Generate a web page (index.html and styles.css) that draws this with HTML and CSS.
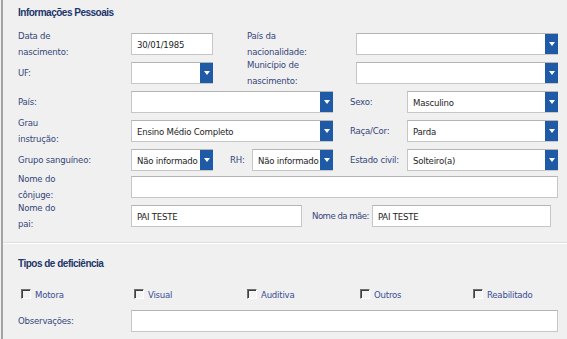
FILE: index.html
```html
<!doctype html>
<html lang="pt-br">
  <head>
    <meta charset="utf-8">
    <title>Informações Pessoais</title>
    <link rel="stylesheet" href="styles.css">
  </head>
  <body>
    <div id="panel">

      <div class="section" id="pessoais">
        <div class="title">Informações Pessoais</div>
        <div class="rows">
          <div class="row">
            <div class="lbl">Data de<br>nascimento:</div>
            <div class="field w82">30/01/1985</div>
            <div class="lbl lbl-nac">País da<br>nacionalidade:</div>
            <div class="field select w202"><span class="val"></span><span class="arrow"></span></div>
          </div>
          <div class="row">
            <div class="lbl">UF:</div>
            <div class="field select w82"><span class="val"></span><span class="arrow"></span></div>
            <div class="lbl lbl-nac">Município de<br>nascimento:</div>
            <div class="field select w202"><span class="val"></span><span class="arrow"></span></div>
          </div>
          <div class="row">
            <div class="lbl">País:</div>
            <div class="field select w202"><span class="val"></span><span class="arrow"></span></div>
            <div class="lbl lbl-right">Sexo:</div>
            <div class="field select w151"><span class="val">Masculino</span><span class="arrow"></span></div>
          </div>
          <div class="row">
            <div class="lbl">Grau<br>instrução:</div>
            <div class="field select w202"><span class="val">Ensino Médio Completo</span><span class="arrow"></span></div>
            <div class="lbl lbl-right">Raça/Cor:</div>
            <div class="field select w151"><span class="val">Parda</span><span class="arrow"></span></div>
          </div>
          <div class="row">
            <div class="lbl">Grupo sanguíneo:</div>
            <div class="field select w82"><span class="val">Não informado</span><span class="arrow"></span></div>
            <div class="lbl lbl-rh">RH:</div>
            <div class="field select w81"><span class="val">Não informado</span><span class="arrow"></span></div>
            <div class="lbl lbl-right">Estado civil:</div>
            <div class="field select w151"><span class="val">Solteiro(a)</span><span class="arrow"></span></div>
          </div>
          <div class="row row-conj">
            <div class="lbl">Nome do<br>cônjuge:</div>
            <div class="field w427"></div>
          </div>
          <div class="row">
            <div class="lbl">Nome do<br>pai:</div>
            <div class="field w171">PAI TESTE</div>
            <div class="lbl lbl-mae">Nome da mãe:</div>
            <div class="field w179">PAI TESTE</div>
          </div>
        </div>
      </div>

      <div class="section" id="deficiencia">
        <div class="title">Tipos de deficiência</div>
        <div class="checks">
          <label class="check"><span class="box"></span>Motora</label>
          <label class="check"><span class="box"></span>Visual</label>
          <label class="check"><span class="box"></span>Auditiva</label>
          <label class="check"><span class="box"></span>Outros</label>
          <label class="check"><span class="box"></span>Reabilitado</label>
        </div>
        <div class="row">
          <div class="lbl">Observações:</div>
          <div class="field w427"></div>
        </div>
      </div>

    </div>
  </body>
</html>
```

FILE: styles.css
```css
body {
  margin: 0;
  background-color: #f0f0f0;
  font-family: "DejaVu Sans Condensed", "Liberation Sans", sans-serif;
  font-stretch: condensed;
  font-size: 9.5px;
  letter-spacing: -0.2px;
  color: #35477a;
}

#panel {
  margin-left: 1px;
  border-left: 2px solid #a4a4a4;
  height: 339px;
  box-sizing: border-box;
}

.section {
  padding-left: 15px;
}

#pessoais {
  padding-top: 5px;
  padding-bottom: 15px;
  border-bottom: 1px solid #dedede;
}

#deficiencia {
  padding-top: 12px;
  border-top: 1px solid #ffffff;
}

.title {
  font-family: "Liberation Sans", sans-serif;
  font-stretch: normal;
  font-weight: bold;
  font-size: 10px;
  letter-spacing: -0.5px;
  line-height: 16px;
  color: #22366a;
  margin-bottom: 12px;
}

.rows {
  display: flex;
  flex-direction: column;
  gap: 7px;
}

.row {
  display: flex;
  align-items: center;
  height: 22px;
}

.row-conj {
  margin-top: -2px;
}

.lbl {
  flex: none;
  width: 113px;
  line-height: 16px;
  white-space: nowrap;
}

.lbl-nac {
  width: 109px;
  margin-left: 34px;
}

.lbl-right {
  width: 57px;
  margin-left: 17px;
}

.lbl-rh {
  width: 22px;
  margin-left: 17px;
}

.lbl-mae {
  width: 60px;
  margin-left: 10px;
  letter-spacing: -0.5px;
}

.field {
  flex: none;
  display: flex;
  align-items: center;
  height: 22px;
  box-sizing: border-box;
  background-color: #ffffff;
  border: 1px solid #c6c6c6;
  border-top-color: #b4b4b4;
  padding-left: 5px;
  color: #1e1e1e;
  white-space: nowrap;
  overflow: hidden;
}

.select {
  padding-right: 0;
  border-right: none;
}

.val {
  flex: 1;
  overflow: hidden;
}

.arrow {
  flex: none;
  width: 13px;
  height: 22px;
  margin-top: -1px;
  margin-bottom: -1px;
  background-color: #1f5aa6;
  display: flex;
  align-items: center;
  justify-content: center;
}

.arrow::after {
  content: "";
  border-left: 3px solid transparent;
  border-right: 3px solid transparent;
  border-top: 4px solid #ffffff;
}

.w81 { width: 81px; }
.w82 { width: 82px; }
.w151 { width: 151px; }
.w171 { width: 171px; }
.w179 { width: 179px; }
.w202 { width: 202px; }
.w427 { width: 427px; }

.checks {
  display: grid;
  grid-template-columns: repeat(5, 113px);
  margin-top: 14px;
  margin-bottom: 8px;
  padding-left: 3px;
  height: 16px;
  align-items: center;
}

.check {
  display: flex;
  align-items: center;
  color: #3a4d94;
}

.box {
  width: 8px;
  height: 8px;
  margin-right: 4px;
  background-color: #f4f4f4;
  border-top: 1px solid #6e6e6e;
  border-left: 1px solid #6e6e6e;
  border-right: 1px solid #ffffff;
  border-bottom: 1px solid #ffffff;
  box-shadow: inset 1px 1px 0 #404040;
}
```
